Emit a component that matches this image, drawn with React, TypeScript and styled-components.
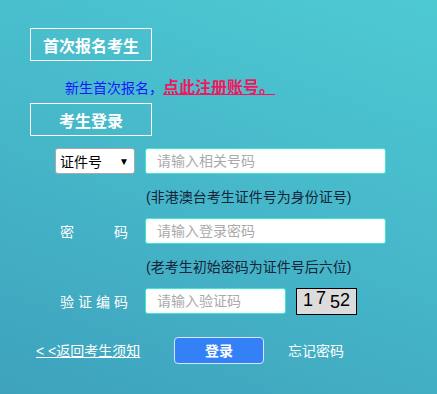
import styled, { createGlobalStyle } from "styled-components";

const GlobalStyle = createGlobalStyle`
    html, body {
        margin: 0;
        padding: 0;
    }
    body {
        font-family: "Liberation Sans", "Noto Sans CJK SC", sans-serif;
    }
`;

const Page = styled.div`
    box-sizing: border-box;
    width: 100%;
    min-height: 100vh;
    padding: 28px 0 0 30px;
    background: linear-gradient(20deg, #3ea2bd 0%, #45b5c8 45%, #4ecad3 100%);
    font-family: "Liberation Sans", "Noto Sans CJK SC", sans-serif;
`;

const SectionTitle = styled.div`
    box-sizing: border-box;
    width: 122px;
    height: 33px;
    border: 1px solid #fff;
    color: #fff;
    font-size: 16px;
    font-weight: bold;
    display: flex;
    align-items: center;
    justify-content: center;
`;

const RegisterLine = styled.div`
    display: flex;
    align-items: baseline;
    height: 20px;
    margin: 13px 0 9px 35px;
`;

const BlueText = styled.span`
    color: #1717ff;
    font-size: 14px;
`;

const RegisterLink = styled.a`
    color: #f2165e;
    font-size: 16px;
    font-weight: bold;
    text-decoration: underline;
    padding-right: 4px;
`;

const Form = styled.div`
    display: flex;
    flex-direction: column;
    margin-top: 12px;
    margin-left: 25px;
`;

const Row = styled.div`
    display: flex;
    align-items: center;
    gap: 10px;
    height: 26px;
`;

const LabelCell = styled.div`
    width: 80px;
    display: flex;
    justify-content: space-between;
    box-sizing: border-box;
    padding: 0 7px 0 5px;
    color: #fff;
    font-size: 14px;
`;

const FakeSelect = styled.div`
    box-sizing: border-box;
    width: 80px;
    height: 26px;
    background: #fff;
    border: 1px solid #a9a9a9;
    border-radius: 3px;
    display: flex;
    align-items: center;
    justify-content: space-between;
    padding: 0 5px 0 4px;
    font-size: 14px;
    color: #000;
    span:last-child {
        font-size: 10px;
    }
`;

const TextInput = styled.input<{ $w: number }>`
    box-sizing: border-box;
    width: ${(p) => p.$w}px;
    height: 26px;
    border: 1px solid #3fe6d6;
    border-radius: 3px;
    background: #fff;
    padding: 0 0 0 11px;
    font-size: 14px;
    font-family: "Liberation Sans", "Noto Sans CJK SC", sans-serif;
    outline: none;
    &::placeholder {
        color: #aaa;
    }
`;

const Hint = styled.div`
    margin-left: 91px;
    height: 44px;
    display: flex;
    align-items: center;
    color: #14243a;
    font-size: 14px;
`;

const Captcha = styled.div`
    box-sizing: border-box;
    width: 61px;
    height: 27px;
    background: #dcdcdc;
    border: 1px solid #000;
    display: flex;
    align-items: center;
    justify-content: center;
    font-family: "Liberation Sans", sans-serif;
    font-size: 18px;
    color: #000;
`;

const Digit = styled.span<{ $dy: number; $gap?: number }>`
    position: relative;
    top: ${(p) => p.$dy}px;
    margin-left: ${(p) => p.$gap ?? 0}px;
`;

const Actions = styled.div`
    display: flex;
    align-items: center;
    margin: 23px 0 0 6px;
    height: 26px;
`;

const BackLink = styled.a`
    color: #fff;
    font-size: 14px;
    text-decoration: underline;
    width: 138px;
`;

const LoginButton = styled.button`
    box-sizing: border-box;
    width: 90px;
    height: 27px;
    background: #3480f6;
    border: 1px solid #d6e6ff;
    border-radius: 4px;
    color: #fff;
    font-size: 14px;
    font-weight: bold;
    font-family: "Liberation Sans", "Noto Sans CJK SC", sans-serif;
`;

const Forgot = styled.span`
    color: #fff;
    font-size: 14px;
    margin-left: 24px;
`;

function App() {
    return (
        <Page>
            <GlobalStyle />
            <SectionTitle>首次报名考生</SectionTitle>
            <RegisterLine>
                <BlueText>新生首次报名，</BlueText>
                <RegisterLink>点此注册账号。</RegisterLink>
            </RegisterLine>
            <SectionTitle>考生登录</SectionTitle>
            <Form>
                <Row>
                    <FakeSelect>
                        <span>证件号</span>
                        <span>▼</span>
                    </FakeSelect>
                    <TextInput $w={241} placeholder="请输入相关号码" />
                </Row>
                <Hint>(非港澳台考生证件号为身份证号)</Hint>
                <Row>
                    <LabelCell>
                        <span>密</span>
                        <span>码</span>
                    </LabelCell>
                    <TextInput $w={241} type="password" placeholder="请输入登录密码" />
                </Row>
                <Hint>(老考生初始密码为证件号后六位)</Hint>
                <Row>
                    <LabelCell>
                        <span>验</span>
                        <span>证</span>
                        <span>编</span>
                        <span>码</span>
                    </LabelCell>
                    <TextInput $w={141} placeholder="请输入验证码" />
                    <Captcha>
                        <Digit $dy={-1}>1</Digit>
                        <Digit $dy={-3} $gap={3}>7</Digit>
                        <Digit $dy={1} $gap={4}>5</Digit>
                        <Digit $dy={-1}>2</Digit>
                    </Captcha>
                </Row>
            </Form>
            <Actions>
                <BackLink>&lt; &lt;返回考生须知</BackLink>
                <LoginButton>登录</LoginButton>
                <Forgot>忘记密码</Forgot>
            </Actions>
        </Page>
    );
}

export default App;
